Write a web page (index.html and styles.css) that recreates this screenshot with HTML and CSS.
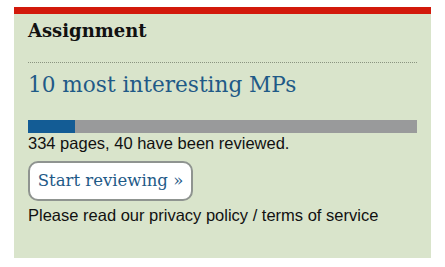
FILE: index.html
```html
<!DOCTYPE html>
<html lang="en">

<head>
    <meta charset="UTF-8">
    <title>Assignment</title>
    <link rel="stylesheet" href="styles.css">
</head>

<body>
    <div class="assignment">
        <h3 class="label">Assignment</h3>
        <h2 class="title"><a href="#">10 most interesting MPs</a></h2>
        <div class="progress">
            <div class="progress-done" style="width: 12%"></div>
        </div>
        <p class="count">334 pages, 40 have been reviewed.</p>
        <a href="#" class="start">Start reviewing &raquo;</a>
        <p class="terms">Please read our privacy policy / terms of service</p>
    </div>
</body>

</html>
```

FILE: styles.css
```css
* {
    padding: 0;
    margin: 0;
    box-sizing: border-box;
}

body {
    background: #fff;
    padding: 7px 14px 0 14px;
    width: 445px;
}

.assignment {
    width: 417px;
    height: 251px;
    background: #d9e4cb;
    border-top: 7px solid #d2190b;
    padding: 0 14px;
}

.label {
    font-family: "DejaVu Serif", Georgia, serif;
    font-size: 18px;
    font-weight: bold;
    color: #111;
    padding-top: 6px;
    height: 49px;
    border-bottom: 1px dotted #8a9480;
}

.title {
    font-family: "DejaVu Serif", Georgia, serif;
    font-size: 21.6px;
    font-weight: normal;
    padding-top: 9px;
    height: 57px;
}

.title a {
    color: #1f5a87;
    text-decoration: none;
}

.progress {
    height: 13px;
    background: #999a9b;
}

.progress-done {
    height: 100%;
    background: #135c95;
}

.count,
.terms {
    font-family: "Liberation Sans", Arial, sans-serif;
    font-size: 16.5px;
    color: #111;
}

.count {
    padding-top: 1px;
    height: 28px;
}

.start {
    display: inline-block;
    width: 165px;
    height: 40px;
    line-height: 36px;
    text-align: center;
    border: 2px solid #8f9490;
    border-radius: 10px;
    background: #fff;
    font-family: "DejaVu Serif", Georgia, serif;
    font-size: 16.5px;
    color: #1f5a87;
    text-decoration: none;
}

.terms {
    padding-top: 5px;
}
```
